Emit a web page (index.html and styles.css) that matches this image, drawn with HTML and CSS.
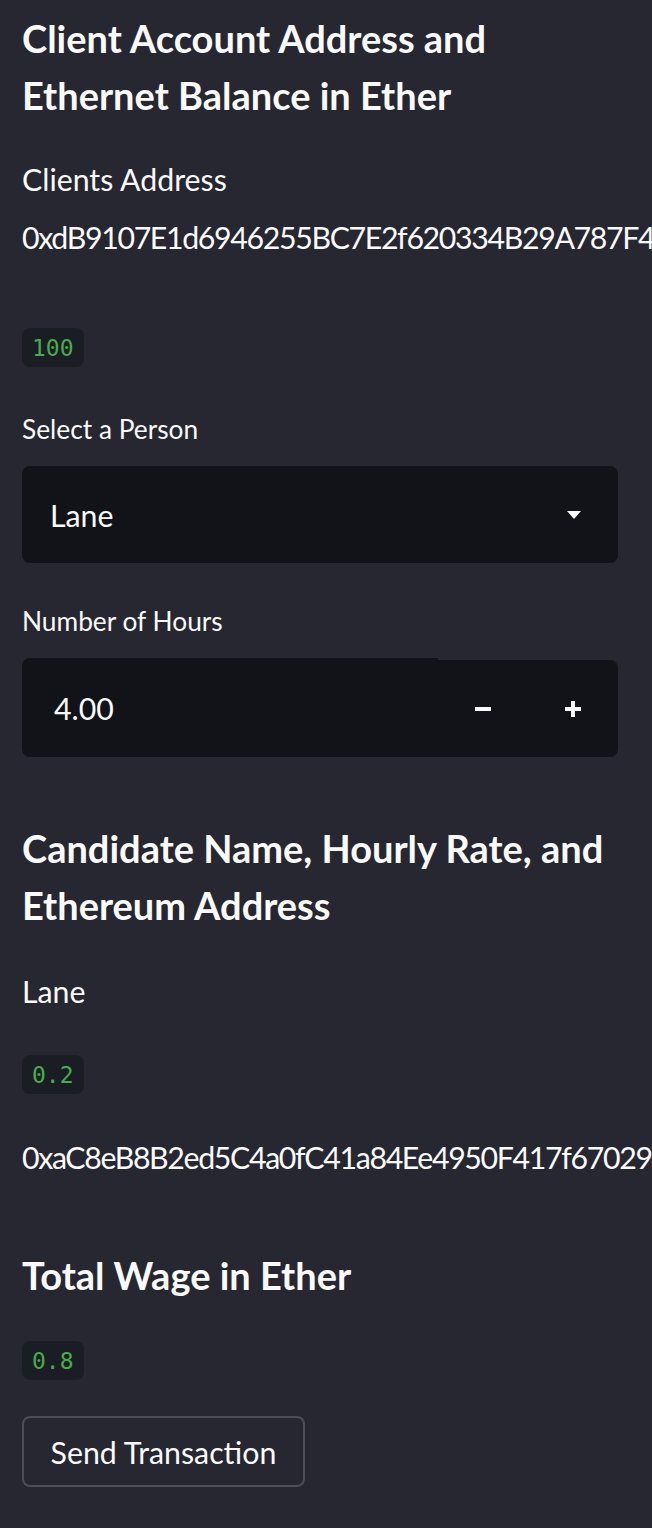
FILE: index.html
```html
<!DOCTYPE html>
<html lang="en">
<head>
<meta charset="utf-8">
<title>Payroll</title>
<link rel="stylesheet" href="styles.css">
</head>
<body>
<main class="sidebar">
  <h2 class="heading h-first">Client Account Address and Ethernet Balance in Ether</h2>
  <p class="text t-clients">Clients Address</p>
  <p class="text addr t-addr1">0xdB9107E1d6946255BC7E2f620334B29A787F4</p>
  <div class="badge-row b-100"><code class="badge">100</code></div>

  <div class="label l-person">Select a Person</div>
  <div class="select">
    <span class="select-value">Lane</span>
    <svg class="caret" width="14" height="8" viewBox="0 0 14 8"><path d="M0 0H14L7 8Z" fill="#fafafa"/></svg>
  </div>

  <div class="label l-hours">Number of Hours</div>
  <div class="num">
    <div class="num-field">4.00</div>
    <div class="num-btns">
      <div class="step"><svg width="16" height="4" viewBox="0 0 16 4"><rect width="16" height="4" fill="#fafafa"/></svg></div>
      <div class="step"><svg width="16" height="16" viewBox="0 0 16 16"><rect x="6" y="0" width="4" height="16" fill="#fafafa"/><rect x="0" y="6" width="16" height="4" fill="#fafafa"/></svg></div>
    </div>
  </div>

  <h2 class="heading h-cand">Candidate Name, Hourly Rate, and Ethereum Address</h2>
  <p class="text t-lane">Lane</p>
  <div class="badge-row b-rate"><code class="badge">0.2</code></div>
  <p class="text addr t-addr2">0xaC8eB8B2ed5C4a0fC41a84Ee4950F417f67029</p>

  <h2 class="heading h-total">Total Wage in Ether</h2>
  <div class="badge-row b-wage"><code class="badge">0.8</code></div>
  <div class="btn-row"><button class="btn">Send Transaction</button></div>
</main>
</body>
</html>
```

FILE: styles.css
```css
html, body {
  margin: 0;
  padding: 0;
  background: #262730;
  overflow: hidden;
}

body {
  width: 652px;
  height: 1528px;
  font-family: Lato, "Noto Sans", sans-serif;
  color: #fafafa;
}

.sidebar {
  padding: 10px 34px 0 22px;
  display: flex;
  flex-direction: column;
  align-items: stretch;
  overflow: hidden;
}

.heading {
  margin: 0;
  font-size: 38px;
  font-weight: 700;
  line-height: 57px;
}

.text {
  margin: 0;
  font-size: 30.3px;
  line-height: 40px;
  white-space: nowrap;
}

.addr {
  letter-spacing: -1.35px;
}

.label {
  font-size: 26.3px;
  line-height: 36px;
}

.badge-row {
  display: flex;
}

.badge {
  display: inline-flex;
  align-items: center;
  height: 39px;
  padding: 0 10px;
  border-radius: 8px;
  background: #1b1d24;
  color: #45ad4c;
  font-family: "DejaVu Sans Mono", "Liberation Mono", monospace;
  font-size: 23px;
}

.t-clients { margin-top: 35px; }
.t-addr1 { margin-top: 18px; }
.b-100 { margin-top: 71px; }
.l-person { margin-top: 44px; }
.select { margin-top: 19px; }
.l-hours { margin-top: 40px; }
.num { margin-top: 19px; }
.h-cand { margin-top: 63px; }
.t-lane { margin-top: 37px; }
.b-rate { margin-top: 44px; }
.t-addr2 { margin-top: 43px; }
.h-total { margin-top: 70px; }
.b-wage { margin-top: 37px; }
.btn-row { margin-top: 36px; display: flex; }

.select {
  height: 97px;
  display: flex;
  align-items: center;
  justify-content: space-between;
  padding: 0 37px 0 28px;
  background: #121318;
  border-radius: 8px;
  font-size: 30.3px;
}

.num {
  height: 99px;
  display: flex;
  align-items: flex-end;
}

.num-field {
  flex: 1;
  height: 99px;
  display: flex;
  align-items: center;
  padding-left: 32px;
  padding-top: 1px;
  box-sizing: border-box;
  background: #121318;
  border-radius: 8px 0 0 8px;
  font-size: 30.3px;
}

.num-btns {
  display: flex;
  height: 97px;
  background: #121318;
  border-radius: 0 8px 8px 0;
}

.step {
  width: 90px;
  display: flex;
  align-items: center;
  justify-content: center;
}

.btn {
  width: 283px;
  height: 71px;
  box-sizing: border-box;
  border: 2px solid #4c4e57;
  border-radius: 8px;
  background: #262730;
  color: #fafafa;
  font-family: Lato, "Noto Sans", sans-serif;
  font-size: 30.3px;
  padding: 0;
}
```
